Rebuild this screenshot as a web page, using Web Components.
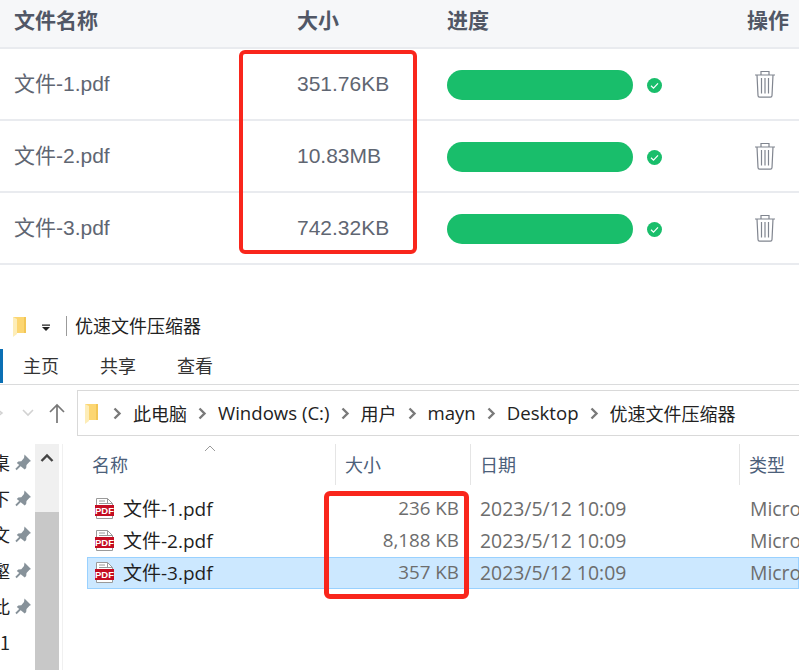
<!DOCTYPE html>
<html lang="zh">
<head>
<meta charset="utf-8">
<title>文件压缩结果</title>
<style>
    html, body { margin: 0; height: 670px; overflow: hidden; background: #fff; }
    body { position: relative; font-family: "Liberation Sans", "Noto Sans CJK SC", sans-serif; }
</style>
</head>
<body>
<upload-table>
    <upload-row name="文件-1.pdf" size="351.76KB"></upload-row>
    <upload-row name="文件-2.pdf" size="10.83MB"></upload-row>
    <upload-row name="文件-3.pdf" size="742.32KB"></upload-row>
</upload-table>

<explorer-window>
    <nav-item slot="nav" label="桌" pinned></nav-item>
    <nav-item slot="nav" label="下" pinned></nav-item>
    <nav-item slot="nav" label="文" pinned></nav-item>
    <nav-item slot="nav" label="壑" pinned></nav-item>
    <nav-item slot="nav" label="此" pinned></nav-item>
    <nav-item slot="nav" label="1"></nav-item>
    <file-row name="文件-1.pdf" size="236 KB"></file-row>
    <file-row name="文件-2.pdf" size="8,188 KB"></file-row>
    <file-row name="文件-3.pdf" size="357 KB" selected></file-row>
</explorer-window>

<red-mark style="left:239px;top:50px;width:178px;height:204px"></red-mark>
<red-mark style="left:324px;top:491px;width:145px;height:108px;border-width:5px"></red-mark>

<script>
const folderIcon = (w, h) => `
    <svg width="${w}" height="${h}" viewBox="0 0 14 21" style="display:block">
        <path d="M1 1h13v16H4z" fill="#fcd672"/>
        <path d="M1 1l4 2v15l-4 3z" fill="#fdedb8"/>
        <path d="M12 1h2v16h-2z" fill="#f2c656"/>
    </svg>`;

class UploadTable extends HTMLElement {
    constructor() {
        super();
        this.attachShadow({ mode: 'open' });
        this.shadowRoot.innerHTML = `
            <style>
                :host { display: block; }
                .head {
                    display: grid;
                    grid-template-columns: 283px 150px 300px 1fr;
                    align-items: center;
                    box-sizing: border-box;
                    height: 49px;
                    padding: 0 0 9px 14px;
                    background: #f6f7f9;
                    border-bottom: 2px solid #e9ebef;
                    color: #515766;
                    font: bold 21px "Liberation Sans", "Noto Sans CJK SC", sans-serif;
                }
            </style>
            <div class="head">
                <span>文件名称</span><span>大小</span><span>进度</span><span>操作</span>
            </div>
            <slot></slot>
        `;
    }
}

class UploadRow extends HTMLElement {
    constructor() {
        super();
        this.attachShadow({ mode: 'open' });
        this.shadowRoot.innerHTML = `
            <style>
                :host {
                    display: grid;
                    grid-template-columns: 283px 150px 300px 1fr;
                    align-items: center;
                    box-sizing: border-box;
                    height: 72px;
                    padding-left: 14px;
                    border-bottom: 2px solid #e9ebef;
                    color: #5f6672;
                    font-family: "Liberation Sans", "Noto Sans CJK SC", sans-serif;
                }
                .name { font-size: 21px; padding-bottom: 5px; }
                .size { font-size: 21px; padding-bottom: 1px; }
                .progress { display: flex; align-items: center; gap: 14px; padding-top: 2px; }
                .bar { width: 186px; height: 30px; border-radius: 15px; background: #19be6b; }
                .trash { display: block; margin-left: 7px; }
            </style>
            <span class="name">${this.getAttribute('name')}</span>
            <span class="size">${this.getAttribute('size')}</span>
            <div class="progress">
                <div class="bar"></div>
                <svg width="15" height="15" viewBox="0 0 15 15">
                    <circle cx="7.5" cy="7.5" r="7.5" fill="#19be6b"/>
                    <path d="M4 7.8l2.5 2.4L11 5.4" fill="none" stroke="#fff" stroke-width="1.2"/>
                </svg>
            </div>
            <svg class="trash" width="22" height="28" viewBox="0 0 22 28" fill="none" stroke="#80858f" stroke-width="1.2">
                <path d="M1 5h20M7 5V1.5h8V5"/>
                <path d="M3 5l1 20.5c0 1 .6 1.7 1.6 1.7h10.8c1 0 1.6-.7 1.6-1.7L19 5"/>
                <path d="M7.5 8v15.5M11 8v15.5M14.5 8v15.5"/>
            </svg>
        `;
    }
}

class RedMark extends HTMLElement {
    constructor() {
        super();
        this.attachShadow({ mode: 'open' });
        this.shadowRoot.innerHTML = `
            <style>
                :host {
                    position: absolute;
                    box-sizing: border-box;
                    border: 4px solid #f9261c;
                    border-radius: 6px;
                }
            </style>
        `;
    }
}

class NavItem extends HTMLElement {
    constructor() {
        super();
        this.attachShadow({ mode: 'open' });
        const pin = this.hasAttribute('pinned') ? `
            <svg width="16" height="17" viewBox="0 0 16 16" fill="#87929a">
                <path d="M9.500 0L16 6.500l-1.500.7-3 3.300-.3 3-1.500 1.500L1.800 8.500 3.300 7l3-.3L9 3.500z"/>
                <path d="M6 10l-5 5" stroke="#87929a" stroke-width="1.800"/>
            </svg>` : '';
        this.shadowRoot.innerHTML = `
            <style>
                :host {
                    display: flex;
                    align-items: center;
                    height: 36px;
                    gap: 5px;
                    font: 18px "Noto Sans CJK SC", sans-serif;
                    color: #222;
                }
                .clip {
                    display: flex;
                    justify-content: flex-end;
                    width: 10px;
                    overflow: hidden;
                }
                .clip span { flex: none; }
            </style>
            <div class="clip"><span>${this.getAttribute('label')}</span></div>
            ${pin}
        `;
    }
}

class FileRow extends HTMLElement {
    constructor() {
        super();
        this.attachShadow({ mode: 'open' });
        this.shadowRoot.innerHTML = `
            <style>
                :host {
                    display: grid;
                    grid-template-columns: 8px 20px 214px 130px 21px 270px 1fr;
                    align-items: center;
                    box-sizing: border-box;
                    height: 32px;
                    font: 19.400px "Open Sans", "Noto Sans CJK SC", sans-serif;
                    color: #6d6d6d;
                    white-space: nowrap;
                    overflow: hidden;
                }
                :host([selected]) {
                    background: #cce8ff;
                    box-shadow: inset 0 0 0 1px #99d1ff;
                }
                span { padding-bottom: 2px; }
                .icon { grid-column: 2; position: relative; height: 24px; }
                .icon svg { display: block; }
                .icon b {
                    position: absolute;
                    left: 0; top: 8px;
                    width: 19px;
                    height: 11px;
                    background: #c40d22;
                    color: #fff;
                    font: bold 9.500px/11px "Liberation Sans", sans-serif;
                    text-align: center;
                }
                .name { grid-column: 3; padding-left: 8px; color: #1f1f1f; font-size: 19px; }
                .size { grid-column: 4; text-align: right; font-size: 18.800px; }
                .date { grid-column: 6; }
                .type { grid-column: 7; }
            </style>
            <div class="icon">
                <svg width="20" height="24" viewBox="0 0 20 24" fill="none" stroke="#9a9a9a">
                    <path d="M1.500 1.500h11l5 5v15h-16z" fill="#fff"/>
                    <path d="M12.500 1.500v5h5M4 4h6M4 6.500h9"/>
                </svg>
                <b>PDF</b>
            </div>
            <span class="name">${this.getAttribute('name')}</span>
            <span class="size">${this.getAttribute('size')}</span>
            <span class="date">2023/5/12 10:09</span>
            <span class="type">Micro</span>
        `;
    }
}

class ExplorerWindow extends HTMLElement {
    constructor() {
        super();
        this.attachShadow({ mode: 'open' });
        const sep = `<svg width="9" height="13" viewBox="0 0 9 13"><path d="M1.500 1.500l5 5-5 5" fill="none" stroke="#7a7a7a" stroke-width="2.400"/></svg>`;
        this.shadowRoot.innerHTML = `
            <style>
                :host {
                    display: block;
                    font: 18px "Open Sans", "Noto Sans CJK SC", sans-serif;
                    color: #222;
                }
                .title {
                    display: flex;
                    align-items: center;
                    height: 34px;
                    margin-top: 44px;
                    padding-left: 12px;
                }
                .title span { padding-bottom: 2px; }
                .caret { margin: 4px 15px 0 15px; display: block; }
                .title i { width: 1px; height: 20px; background: #9b9b9b; margin-right: 8px; }
                .tabs {
                    display: flex;
                    align-items: center;
                    height: 37px;
                    margin-top: 4px;
                    border-bottom: 1px solid #dadbdc;
                    color: #333;
                }
                .tabs u { width: 3px; height: 34px; background: #0a6fb4; margin-right: 20px; }
                .tabs span { margin-right: 41px; padding-bottom: 2px; }
                .addr-line {
                    display: flex;
                    align-items: center;
                    height: 46px;
                    margin-top: 5px;
                }
                .nav-btns {
                    display: flex;
                    align-items: center;
                    width: 77px;
                    flex: none;
                    box-sizing: border-box;
                }
                .nav-btns svg { display: block; flex: none; }
                .addr {
                    flex: 1;
                    display: flex;
                    align-items: center;
                    gap: 11px;
                    height: 44px;
                    padding-left: 6px;
                    border: 1px solid #d9d9d9;
                    border-right: 0;
                    white-space: nowrap;
                }
                .addr svg { display: block; flex: none; }
                .addr span:not(.fold) { padding-bottom: 1px; }
                .addr .fold { margin-right: 4px; }
                .addr .lat { font-size: 18.600px; }
                .body {
                    display: flex;
                    height: 226px;
                    margin-top: 8px;
                }
                .nav {
                    width: 35px;
                    flex: none;
                }
                .scroll {
                    width: 24px;
                    flex: none;
                    display: flex;
                    flex-direction: column;
                    background: #c8c8c8;
                    margin-right: 3px;
                }
                .scroll div {
                    height: 68px;
                    background: #f0f0f0;
                    display: flex;
                    justify-content: center;
                    padding-top: 9px;
                    box-sizing: border-box;
                }
                .scroll svg { display: block; }
                .files {
                    flex: 1;
                    min-width: 0;
                    border-left: 1px solid #f0f0f0;
                }
                .cols {
                    display: grid;
                    grid-template-columns: 272px 135px 269px 1fr;
                    height: 41px;
                    color: #4c607a;
                    margin-bottom: 8px;
                }
                .cols span {
                    display: flex;
                    align-items: center;
                    position: relative;
                    padding: 0 0 2px 9px;
                    border-left: 1px solid #e5e5e5;
                    white-space: nowrap;
                }
                .cols span:first-child { border-left: 0; padding-left: 29px; }
                .cols svg { position: absolute; left: 141px; top: 1px; }
                .list { padding-left: 24px; }
            </style>
            <div class="title">
                ${folderIcon(14, 21)}
                <svg class="caret" width="10" height="8" viewBox="0 0 10 8"><path d="M1 0.500h8v1.200H1zM1 3h8L5 7z" fill="#222"/></svg>
                <i></i>
                <span>优速文件压缩器</span>
            </div>
            <div class="tabs">
                <u></u><span>主页</span><span>共享</span><span>查看</span>
            </div>
            <div class="addr-line">
                <div class="nav-btns">
                    <svg width="4" height="10" viewBox="0 0 4 10"><path d="M-3 1l5 4-5 4" fill="none" stroke="#d2d2d2" stroke-width="1.600"/></svg>
                    <svg style="margin-left:18px" width="12" height="8" viewBox="0 0 12 8"><path d="M1 1l5 5 5-5" fill="none" stroke="#d2d2d2" stroke-width="1.600"/></svg>
                    <svg style="margin-left:15px" width="16" height="20" viewBox="0 0 16 20"><path d="M8 20V2M1 9l7-7 7 7" fill="none" stroke="#777" stroke-width="1.700"/></svg>
                </div>
                <div class="addr">
                    <span class="fold">${folderIcon(14, 21)}</span>
                    ${sep}<span>此电脑</span>
                    ${sep}<span class="lat">Windows (C:)</span>
                    ${sep}<span>用户</span>
                    ${sep}<span class="lat">mayn</span>
                    ${sep}<span class="lat">Desktop</span>
                    ${sep}<span>优速文件压缩器</span>
                </div>
            </div>
            <div class="body">
                <div class="nav"><slot name="nav"></slot></div>
                <div class="scroll">
                    <div><svg width="14" height="10" viewBox="0 0 14 10"><path d="M1.500 8L7 2.500 12.500 8" fill="none" stroke="#444" stroke-width="2.400"/></svg></div>
                </div>
                <div class="files">
                    <div class="cols">
                        <span>名称<svg width="12" height="7" viewBox="0 0 12 7"><path d="M1 6l5-5 5 5" fill="none" stroke="#9a9a9a"/></svg></span>
                        <span>大小</span><span>日期</span><span>类型</span>
                    </div>
                    <div class="list"><slot></slot></div>
                </div>
            </div>
        `;
    }
}

customElements.define('upload-table', UploadTable);
customElements.define('upload-row', UploadRow);
customElements.define('red-mark', RedMark);
customElements.define('nav-item', NavItem);
customElements.define('file-row', FileRow);
customElements.define('explorer-window', ExplorerWindow);
</script>
</body>
</html>
